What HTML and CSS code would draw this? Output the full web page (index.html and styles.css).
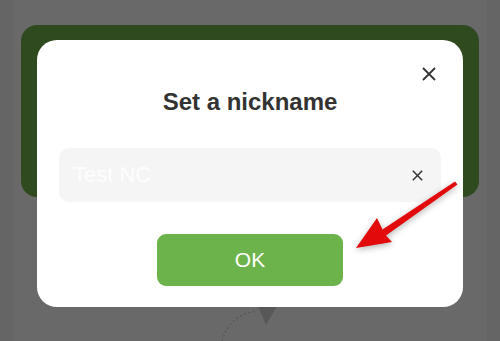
FILE: index.html
```html
<!DOCTYPE html>
<html lang="en">
<head>
<meta charset="utf-8">
<title>Set a nickname</title>
<link rel="stylesheet" href="styles.css">
</head>
<body>
<div class="app">
  <div class="panel">
    <div class="hero"></div>
    <svg class="refresh" width="500" height="341" viewBox="0 0 500 341">
      <path d="M222 341 Q229 315 257 311" fill="none" stroke="#575757" stroke-width="1.4" stroke-dasharray="2 2.5"/>
      <path d="M258 306 L277 306 L266 325 Z" fill="#585858"/>
    </svg>
  </div>
</div>

<div class="overlay">
  <div class="dialog">
    <button class="close" aria-label="Close">
      <svg width="14" height="14" viewBox="0 0 14 14"><path d="M1 1 L13 13 M13 1 L1 13" stroke="#333" stroke-width="1.8" fill="none"/></svg>
    </button>
    <h1 class="title">Set a nickname</h1>
    <div class="field">
      <span class="value">Test NC</span>
      <svg class="clear" width="11" height="11" viewBox="0 0 11 11"><path d="M0.8 0.8 L10.2 10.2 M10.2 0.8 L0.8 10.2" stroke="#333" stroke-width="1.5" fill="none"/></svg>
    </div>
    <button class="ok">OK</button>
  </div>
</div>

<svg class="annot" width="500" height="341" viewBox="0 0 500 341">
  <path d="M356 248 L377 218 L382.5 229.5 L455 181.5 L457.5 184.5 L386 235.5 L392 242 Z" fill="#e20a0a"/>
</svg>
</body>
</html>
```

FILE: styles.css
```css
html, body {
  margin: 0;
  padding: 0;
}
body {
  width: 500px;
  height: 341px;
  overflow: hidden;
  background: #656565;
  font-family: "Liberation Sans", Arial, sans-serif;
  position: relative;
}
.app {
  height: 341px;
  padding: 0 13px;
  box-sizing: border-box;
}
.panel {
  height: 100%;
  background: #696969;
  padding: 25px 8px 0;
  box-sizing: border-box;
}
.hero {
  height: 172px;
  background: #2f4a1f;
  border-radius: 16px;
}
.refresh {
  position: absolute;
  left: 0;
  top: 0;
}
.overlay {
  position: absolute;
  inset: 0;
  display: flex;
  justify-content: center;
  align-items: flex-start;
  padding-top: 40px;
}
.dialog {
  position: relative;
  width: 426px;
  height: 267px;
  box-sizing: border-box;
  background: #fff;
  border-radius: 20px;
  padding: 48px 22px 21px;
  display: flex;
  flex-direction: column;
  align-items: center;
}
.close {
  position: absolute;
  left: 385px;
  top: 27px;
  width: 14px;
  height: 14px;
  padding: 0;
  border: 0;
  background: none;
  display: flex;
}
.title {
  margin: 0;
  font-size: 24px;
  line-height: 28px;
  font-weight: bold;
  color: #333;
}
.field {
  margin-top: 32px;
  width: 100%;
  height: 54px;
  box-sizing: border-box;
  background: #f5f5f5;
  border-radius: 10px;
  display: flex;
  align-items: center;
  justify-content: space-between;
  padding: 0 18px 0 14px;
}
.value {
  font-size: 22px;
  color: #fdfdfd;
}
.clear {
  display: block;
}
.ok {
  margin-top: 32px;
  width: 186px;
  height: 52px;
  border: 0;
  border-radius: 9px;
  background: #6db34b;
  color: #fff;
  font-family: "Liberation Sans", Arial, sans-serif;
  font-size: 21px;
  padding: 0;
}
.annot {
  position: absolute;
  left: 0;
  top: 0;
  pointer-events: none;
  filter: drop-shadow(0 2px 3px rgba(0, 0, 0, 0.3));
}
```
